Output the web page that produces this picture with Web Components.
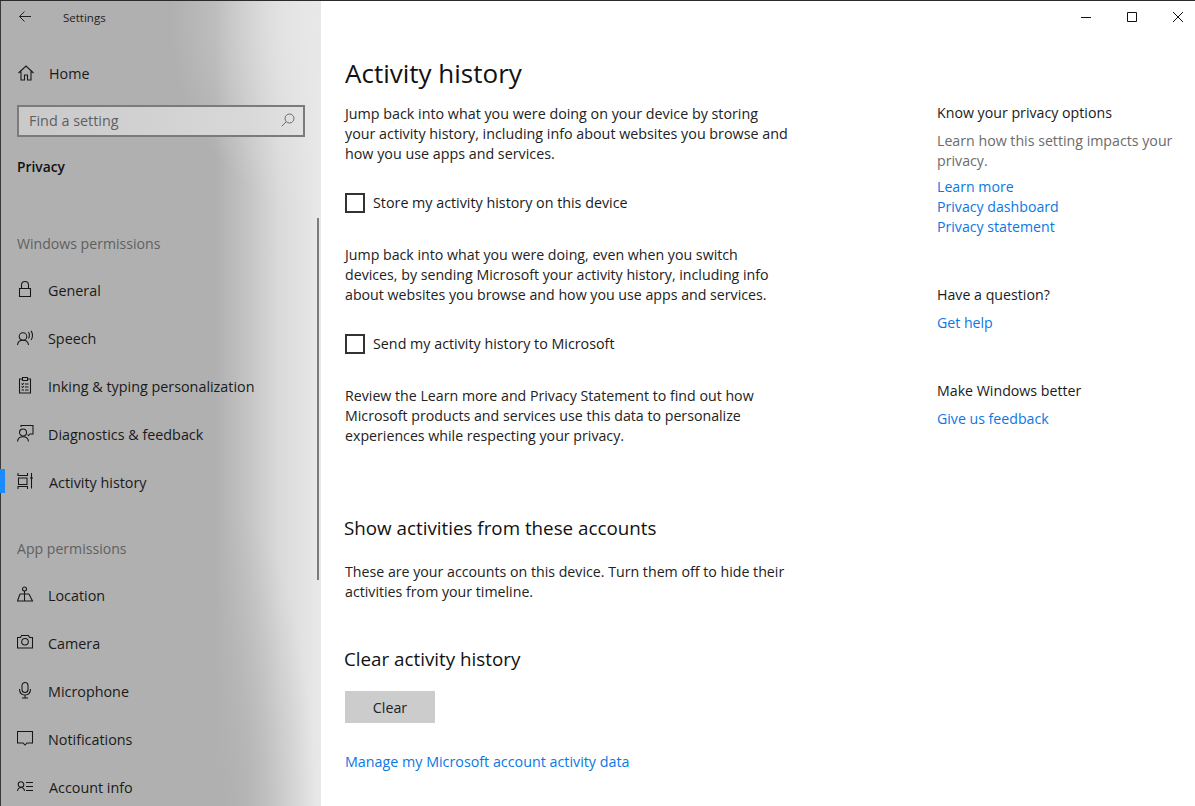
<!DOCTYPE html>
<html><head><meta charset="utf-8"><title>Settings</title>
<style>
html,body{margin:0;padding:0;height:100%;overflow:hidden;background:#fff}
body{font-family:"Open Sans","Noto Sans",sans-serif;font-size:14px;color:#1a1a1a}
</style></head><body>
<settings-window>
  <settings-sidebar slot="side">
    <nav-item label="General"><svg viewBox="0 0 20 20"><path d="M2.500 8.500h11v8h-11zM4.500 8.500V5a3.500 3.500 0 0 1 7 0v3.500"/></svg></nav-item>
    <nav-item label="Speech"><svg viewBox="0 0 20 20"><circle cx="6" cy="8.500" r="3.800"/><path d="M.5 17c.3-3 2.500-4.700 5.500-4.700s5.200 1.700 5.500 4.700M11.500 4c1.200 1.800 1.200 5 0 6.500M14 2.800c2 2.500 2 6.700 0 9.200"/></svg></nav-item>
    <nav-item label="Inking &amp; typing personalization"><svg viewBox="0 0 20 20"><path d="M5.500 3H2.500v14h11V3h-3M5.500 1.500h5v3h-5zM4.500 7.500l1 1 1.500-1.500M8 8h3.500M4.500 10.500l1 1 1.500-1.500M8 11h3.500M4.500 14h2.500M8 14h3.500"/></svg></nav-item>
    <nav-item label="Diagnostics &amp; feedback"><svg viewBox="0 0 20 20"><circle cx="6" cy="8.500" r="3.500"/><path d="M.5 17.500c.3-3 2.500-4.700 5.500-4.700s5.200 1.700 5.500 4.700M4 3V1.500h12v8.500h-3l-1.500 1.500-1-1"/></svg></nav-item>
    <nav-item label="Activity history" active><svg viewBox="0 0 20 20"><path d="M1 1v2.500h9.500V1M1.500 6h8.500v6.500H1.500zM1 17v-2.500h9.500V17M14.500 1v15.500M13 6h3"/></svg></nav-item>
    <nav-head>App permissions</nav-head>
    <nav-item label="Location"><svg viewBox="0 0 20 20"><circle cx="7.500" cy="4" r="2"/><path d="M7.500 6V16M3 9h9M3 9L.5 16h15L12 9"/></svg></nav-item>
    <nav-item label="Camera"><svg viewBox="0 0 20 20"><path d="M.5 4.500h3l1-2h7l1 2h3V15H.5z"/><circle cx="8" cy="8.700" r="3.300"/></svg></nav-item>
    <nav-item label="Microphone"><svg viewBox="0 0 20 20"><rect x="5" y="1.500" width="6" height="10" rx="3"/><path d="M2.500 8c0 4 2 6 5.500 6s5.500-2 5.500-6M8 14v3M5 17h6"/></svg></nav-item>
    <nav-item label="Notifications"><svg viewBox="0 0 20 20"><path d="M.5 2.500h15V14h-5.500L8 16l-2-2H.5z"/></svg></nav-item>
    <nav-item label="Account info" account><svg viewBox="0 0 20 20"><circle cx="4" cy="7.500" r="2.800"/><path d="M.5 14c.3-2.700 1.500-3.600 3.500-3.600s3.200.9 3.500 3.600M9 5.500h7M9 9.500h7M9 13.500h7"/></svg></nav-item>
  </settings-sidebar>
  <settings-main slot="main"></settings-main>
</settings-window>
<script>
const el=(html)=>{const t=document.createElement('template');t.innerHTML=html;return t};
function def(name,html,proto){
  const t=el(html);
  customElements.define(name,class extends HTMLElement{
    constructor(){super();this.attachShadow({mode:'open'}).appendChild(t.content.cloneNode(true));}
    connectedCallback(){proto&&proto.call(this)}
  });
}
def('settings-window',`<style>
:host{display:flex;width:1195px;height:806px;box-sizing:border-box;position:relative;overflow:hidden;border-top:1px solid #2b2b2b}
.side{flex:0 0 321px;display:block}
.main{flex:1;min-width:0}
.caps{position:absolute;right:-6px;top:0;display:flex}
.caps button{all:unset;width:46px;height:32px;display:flex;align-items:center;justify-content:center}
svg{width:10px;height:10px;fill:none;stroke:#111;stroke-width:1}
</style>
<div class="side"><slot name="side"></slot></div>
<div class="main"><slot name="main"></slot></div>
<div class="caps">
<button><svg viewBox="0 0 10 10"><path d="M0 5.500h10"/></svg></button>
<button><svg viewBox="0 0 10 10"><path d="M.5.500h9v9h-9z"/></svg></button>
<button><svg viewBox="0 0 10 10"><path d="M0 0l10 10M10 0L0 10"/></svg></button>
</div>`);
def('settings-sidebar',`<style>
:host{display:block;position:relative;height:805px;box-sizing:border-box;overflow:hidden;box-shadow:inset 1px 0 #3a3a3a;
background:
 radial-gradient(ellipse 150px 190px at 321px 20px,rgba(232,232,232,.8),rgba(232,232,232,0) 100%),
 radial-gradient(ellipse 90px 300px at 225px 805px,rgba(176,176,176,.95),rgba(176,176,176,0) 100%),
 linear-gradient(90deg,#b0b0b0 0,#b0b0b0 215px,#c2c2c2 245px,#dadada 280px,#e8e8e8 319px)}
.bar{height:32px;display:flex;align-items:center;font-size:11.500px;color:#222}
.bar svg{width:16px;height:16px;margin-left:18px;fill:none;stroke:#222;stroke-width:1}
.bar span{margin-left:29px}
.home{height:48px;margin-top:16px;display:flex;align-items:center;padding-left:18px;font-size:14.300px;color:#1a1a1a}
.home svg{width:16px;height:16px;fill:none;stroke:#1a1a1a;stroke-width:1.100;margin-right:15px}
.search{margin:8px 16px 0 17px;height:32px;box-sizing:border-box;width:288px;border:2px solid #7b7b7b;background:linear-gradient(90deg,#c9c9c9,#d8d8d8 80%,#e2e2e2);display:flex;align-items:center;justify-content:space-between;padding:0 8px 2px 10px;color:#5f5f5f;font-size:14.400px}
.search svg{width:14px;height:14px;fill:none;stroke:#6a6a6a;stroke-width:1}
.priv{margin:15px 0 0 17px;font-weight:600;font-size:13.800px;height:30px;line-height:30px;color:#111}
.thumb{position:absolute;left:317px;top:217px;width:2px;height:362px;background:#7c7c7c}
</style>
<div class="bar"><svg viewBox="0 0 16 16"><path d="M13 7.500H1.500M6.500 2.500l-5 5 5 5"/></svg><span>Settings</span></div>
<div class="home"><svg viewBox="0 0 16 16"><path d="M.5 8L8 1l7.500 7M3 6.500V15h3.500V10h3v5H13V6.500"/></svg>Home</div>
<div class="search"><span>Find a setting</span><svg viewBox="0 0 14 14"><circle cx="8.500" cy="5.500" r="4.500"/><path d="M5.300 8.700L.8 13.200"/></svg></div>
<div class="priv">Privacy</div>
<nav-head first>Windows permissions</nav-head>
<slot></slot>
<div class="thumb"></div>`);
def('nav-head',`<style>
:host{display:block;height:45px;padding:0 0 0 17px;font-size:14.100px;color:#606060;line-height:46px;box-sizing:border-box}
:host([first]){margin-top:39px}
:host(:not([first])){margin-top:20px}
</style><slot></slot>`);
def('nav-item',`<style>
:host{display:flex;align-items:center;height:48px;padding-left:17px;position:relative;font-size:14.350px;color:#1a1a1a}
.ic{width:20px;height:20px;margin-right:11px;display:flex}
::slotted(svg){width:20px;height:20px;fill:none;stroke:#161616;stroke-width:1.050}
.bar{display:none;position:absolute;left:0;top:11px;width:5px;height:24px;background:#1a8cff}
:host([active]) .bar{display:block}
:host([active]) .ic,:host([account]) .ic{margin-right:12px}
</style><div class="bar"></div><div class="ic"><slot></slot></div><span id="l"></span>`,function(){this.shadowRoot.getElementById('l').textContent=this.getAttribute('label')});
def('settings-main',`<style>
:host{display:flex;height:805px;color:#1a1a1a;font-size:14.300px;line-height:20px}
.c{width:616px;padding-left:24px;box-sizing:border-box}
.r{flex:1}
h1{font-weight:400;font-size:26px;line-height:38px;margin:53px 0 0 0;color:#111;font-family:inherit}
h2{font-weight:400;font-size:18.800px;line-height:26px;margin:0 0 0 -1px;color:#111}
p{margin:0;width:445px;color:#222}
.s{font-size:14.200px}
.chk{display:flex;align-items:center;height:20px;gap:8px}
.chk i{display:block;width:20px;height:20px;box-sizing:border-box;border:2px solid #333}
a{color:#0a78e6;text-decoration:none;display:block}
.btn{width:90px;height:32px;box-sizing:border-box;padding-top:1px;background:#ccc;display:flex;align-items:center;justify-content:center;color:#222}
.r a{font-size:14.150px}
.r h3{font-weight:400;font-size:14.200px;line-height:20px;margin:0;color:#1a1a1a}
.r p{color:#6b6b6b;width:250px;font-size:14.200px}
</style>
<div class="c">
<h1>Activity history</h1>
<p style="margin-top:12px">Jump back into what you were doing on your device by storing your activity history, including info about websites you browse and how you use apps and services.</p>
<label class="chk" style="margin-top:29px"><i></i>Store my activity history on this device</label>
<p class="s" style="margin-top:32px">Jump back into what you were doing, even when you switch devices, by sending Microsoft your activity history, including info about websites you browse and how you use apps and services.</p>
<label class="chk" style="margin-top:29px"><i></i>Send my activity history to Microsoft</label>
<p class="s" style="margin-top:32px">Review the Learn more and Privacy Statement to find out how Microsoft products and services use this data to personalize experiences while respecting your privacy.</p>
<h2 style="margin-top:69px">Show activities from these accounts</h2>
<p class="s" style="margin-top:21px">These are your accounts on this device. Turn them off to hide their activities from your timeline.</p>
<h2 style="margin-top:44px">Clear activity history</h2>
<div class="btn" style="margin-top:19px">Clear</div>
<a style="margin-top:29px">Manage my Microsoft account activity data</a>
</div>
<div class="r">
<h3 style="margin-top:102px">Know your privacy options</h3>
<p style="margin-top:8px">Learn how this setting impacts your privacy.</p>
<a style="margin-top:6px">Learn more</a><a>Privacy dashboard</a><a>Privacy statement</a>
<h3 style="margin-top:48px">Have a question?</h3>
<a style="margin-top:8px">Get help</a>
<h3 style="margin-top:48px">Make Windows better</h3>
<a style="margin-top:8px">Give us feedback</a>
</div>`);
</script>
</body></html>
